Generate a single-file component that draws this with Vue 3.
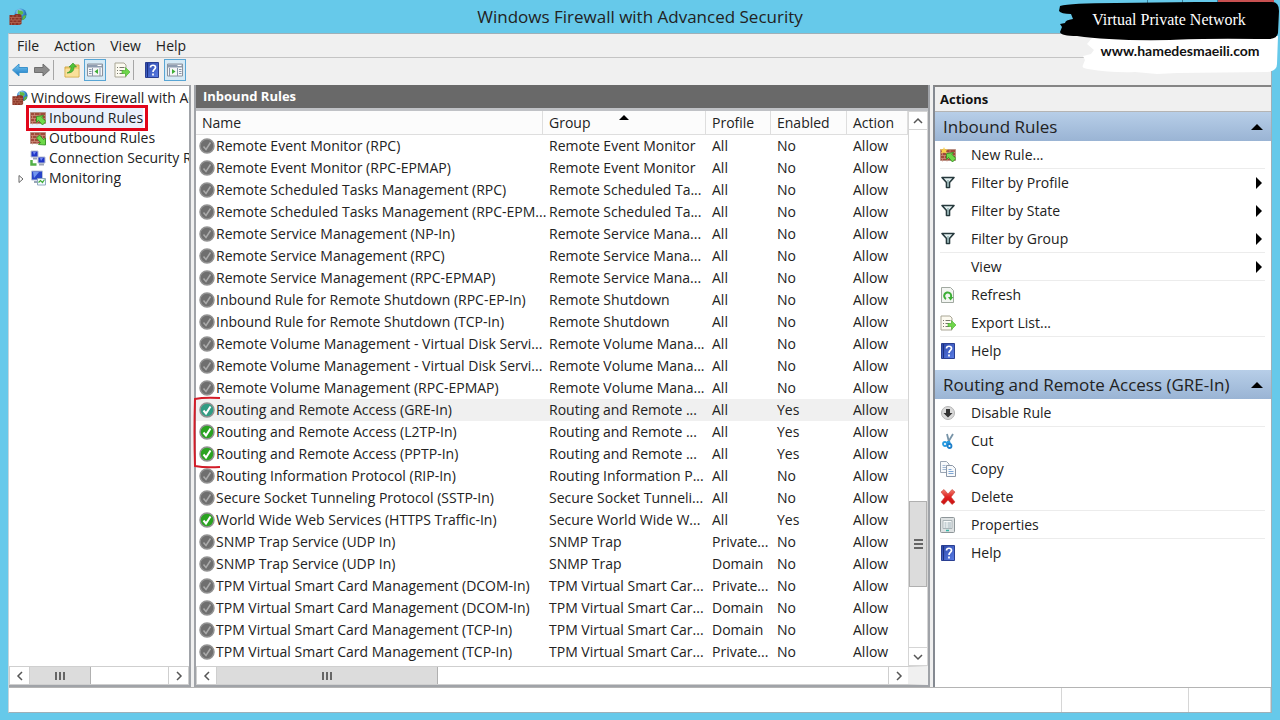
<template>
  <div class="desktop">
    <svg class="sprite" width="0" height="0" aria-hidden="true">
      <defs>
        <radialGradient id="globe" cx="40%" cy="30%" r="75%">
          <stop offset="0" stop-color="#d9f2ff" />
          <stop offset="0.5" stop-color="#3b8fd0" />
          <stop offset="1" stop-color="#124a8c" />
        </radialGradient>
        <linearGradient id="blueArrow" x1="0" y1="0" x2="0" y2="1">
          <stop offset="0" stop-color="#7ccdf5" />
          <stop offset="1" stop-color="#1573c0" />
        </linearGradient>
        <linearGradient id="book" x1="0" y1="0" x2="1" y2="1">
          <stop offset="0" stop-color="#2b46a8" />
          <stop offset="1" stop-color="#5b7ee6" />
        </linearGradient>
        <linearGradient id="redX" x1="0" y1="0" x2="0" y2="1">
          <stop offset="0" stop-color="#f08070" />
          <stop offset="0.5" stop-color="#e02020" />
          <stop offset="1" stop-color="#c81010" />
        </linearGradient>
      </defs>
      <symbol id="firewall" viewBox="0 0 18 18">
        <circle cx="11.5" cy="6.5" r="6" fill="url(#globe)" />
        <path d="M9 2c2 1 4 0 5 2s-1 3-3 3-3-2-2-5zM14 8l3-1c0 3-2 5-4 5z" fill="#5cb845" />
        <path d="M0.500 7h5l1-1h4l2 1v9l-2 1h-10z" fill="#8b3426" />
        <path d="M0.500 9.500h12M0.500 12h12M0.500 14.500h12M4 7v2.500M8 7v2.500M2.500 9.500v2.500M6 9.500v2.500M10 9.500v2.500M4 12v2.500M8 12v2.500M2.500 14.500v2.500M6 14.500v2.500M10 14.500v2.500" stroke="#b9705a" stroke-width="0.700" />
      </symbol>
      <symbol id="wall" viewBox="0 0 16 16">
        <path d="M0.500 2.500h15v11h-15z" fill="#a04a3a" stroke="#b99186" />
        <path d="M1 5.500h14M1 8.500h14M1 11.500h14M4.500 3v2.500M10 3v2.500M2.500 5.500v3M7 5.500v3M12.500 5.500v3M4.500 8.500v3M10 8.500v3M2.500 11.500v3M7 11.500v3" stroke="#d39482" stroke-width="0.700" />
      </symbol>
      <symbol id="inbound" viewBox="0 0 16 16">
        <use href="#wall" width="16" height="16" />
        <path d="M6.500 6.500l7-1-1.500 2 4 4-3.500 3.500-4-4.500-2 2z" fill="#6ed94a" stroke="#2c8a1e" stroke-width="0.800" />
      </symbol>
      <symbol id="outbound" viewBox="0 0 16 16">
        <use href="#wall" width="16" height="16" />
        <path d="M15.500 15l-7-.5 2-2-4-4.500 3-3 4 4.500 2-1.500z" fill="#6ed94a" stroke="#2c8a1e" stroke-width="0.800" />
      </symbol>
      <symbol id="newrule" viewBox="0 0 16 16">
        <use href="#inbound" width="16" height="16" />
        <path d="M4 0l1 2.500 3-.5-2 2 1 2.500-3-1-3 1 1-2.500-2-2 3 .5z" fill="#f8cf4a" />
      </symbol>
      <symbol id="connection" viewBox="0 0 16 16">
        <path d="M1 1h7v6h-7z" fill="#1f35c8" stroke="#b8bfd0" />
        <path d="M3 7.500h4v2h-4z" fill="#9aa2b4" />
        <path d="M8 7h7v6h-7z" fill="#1f35c8" stroke="#b8bfd0" />
        <path d="M9 13.500h5v2h-5z" fill="#9aa2b4" />
        <path d="M3 2l3 0-2 3zM10 8l3 0-2 3z" fill="#7289f0" />
        <path d="M1.500 10v4.500h5" fill="none" stroke="#54b048" stroke-width="2.500" />
      </symbol>
      <symbol id="monitoring" viewBox="0 0 16 16">
        <path d="M1.500 1h11v9h-11z" fill="#2845c8" stroke="#b8c4d8" />
        <path d="M3 2l6 0-5 6z" fill="#7196ef" />
        <path d="M4 11h6v2h-6z" fill="#9aa6b8" />
        <path d="M7.500 8.500h8v6.500h-8z" fill="#f4faff" stroke="#90a8c0" />
        <path d="M8.500 12.500l2-2 2 2 2-3" fill="none" stroke="#42ae3a" stroke-width="1.200" />
      </symbol>
      <symbol id="back" viewBox="0 0 16 14">
        <path d="M0.500 7l6.500-6v3.500h8.500v5h-8.500v3.500z" fill="url(#blueArrow)" stroke="#3c93cc" />
      </symbol>
      <symbol id="forward" viewBox="0 0 16 14">
        <path d="M15.500 7l-6.500-6v3.500h-8.500v5h8.500v3.500z" fill="#8b8b8b" stroke="#6f6f6f" />
      </symbol>
      <symbol id="folder" viewBox="0 0 16 16">
        <path d="M1 5h5l2-2h7v12h-14z" fill="#f2cf74" stroke="#d0a84a" />
        <path d="M1.500 7h13v7.500h-13z" fill="#f9e09a" />
        <path d="M3 11c3-1 4-3 4-6h-2l4-4 3.500 4h-2.500c0 4-2 6-7 6z" fill="#4fc238" stroke="#308c24" stroke-width="0.600" />
      </symbol>
      <symbol id="paneleft" viewBox="0 0 16 14">
        <path d="M0.500 1h15v12h-15z" fill="#f5f6f8" stroke="#8c929c" />
        <path d="M1 1.500h14v3h-14z" fill="#8e9cb0" />
        <path d="M10.500 2.500h4" stroke="#ffffff" />
        <path d="M2 6.500h2.500M2 8.500h2.500M2 10.500h2.500M5.500 5v8M13 5v8" stroke="#8897ab" />
        <path d="M11 6v5l-3.500-2.500z" fill="#3fae36" />
      </symbol>
      <symbol id="paneright" viewBox="0 0 16 14">
        <path d="M0.500 1h15v12h-15z" fill="#f5f6f8" stroke="#8c929c" />
        <path d="M1 1.500h14v3h-14z" fill="#8e9cb0" />
        <path d="M10.500 2.500h4" stroke="#ffffff" />
        <path d="M12 6.500h2.500M12 8.500h2.500M12 10.500h2.500M10.500 5v8M2.500 5v8" stroke="#8897ab" />
        <path d="M5 6v5l3.500-2.500z" fill="#3fae36" />
      </symbol>
      <symbol id="export" viewBox="0 0 16 16">
        <path d="M1 1h9l2 2v12h-11z" fill="#fcfaf0" stroke="#a9a695" />
        <path d="M3 5.500h1M3 8.500h1M3 11.500h1M5.500 5.500h5M5.500 8.500h4M5.500 11.500h4" stroke="#77776d" />
        <path d="M8 8.500h3.500v-3l4.500 4.500-4.500 4.500v-3h-3.500z" fill="#6fd64a" stroke="#46ac2e" stroke-width="0.600" />
      </symbol>
      <symbol id="help" viewBox="0 0 14 16">
        <path d="M0.500 0.500h13v15h-13z" fill="url(#book)" stroke="#2a3f92" />
        <path d="M2.500 1v14" stroke="#1b3080" />
        <path d="M5.500 5.500c0-3 5-3 5 0 0 2-2.500 2-2.500 4.500M8 11.500v2" fill="none" stroke="#ffffff" stroke-width="1.700" />
      </symbol>
      <symbol id="filter" viewBox="0 0 16 16">
        <path d="M2 2.500h12l-4.500 5v5h-3v-5z" fill="#e4f1f1" stroke="#27393d" stroke-width="1.600" stroke-linejoin="round" />
        <path d="M8 5v7" stroke="#70999a" />
      </symbol>
      <symbol id="refresh" viewBox="0 0 16 16">
        <path d="M1.500 0.500h9l3 3v12h-12z" fill="#f3f5f2" stroke="#a1a9a1" />
        <path d="M6 12a3.500 3.500 0 1 1 4.500-1" fill="none" stroke="#3cae36" stroke-width="2" />
        <path d="M8 10h5.500l-3 3.500z" fill="#3cae36" />
      </symbol>
      <symbol id="disable" viewBox="0 0 16 16">
        <circle cx="8" cy="8" r="6.500" fill="#d9d9d9" stroke="#b5b5b5" />
        <path d="M6 4h4v4h2.500l-4.500 4.500-4.500-4.500h2.500z" fill="#333333" />
      </symbol>
      <symbol id="cut" viewBox="0 0 16 16">
        <path d="M7 1l2 8M13 1l-6 10" stroke="#7894a8" stroke-width="1.800" />
        <path d="M7 8l3 0 1 3-4 1z" fill="#2a9be0" />
        <circle cx="5" cy="11" r="2" fill="none" stroke="#2a9be0" stroke-width="1.800" />
        <circle cx="9.500" cy="13" r="2" fill="none" stroke="#1e80cb" stroke-width="1.800" />
      </symbol>
      <symbol id="copy" viewBox="0 0 16 16">
        <path d="M0.500 0.500h6l2.500 2.500v8.500h-8.500z" fill="#f7f9fb" stroke="#9ba6b4" />
        <path d="M2.500 4.500h3M2.500 6.500h4M2.500 8.500h4" stroke="#a2b9d4" />
        <path d="M6.500 4.500h6l3 3v8h-9z" fill="#f7f9fb" stroke="#8c97a6" />
        <path d="M8.500 8.500h3M8.500 10.500h5M8.500 12.500h5" stroke="#7ea6d4" />
      </symbol>
      <symbol id="delete" viewBox="0 0 16 16">
        <path d="M1 3l3-2.500 4 4.500 4-4.500 3 2.500-4 5 4 5-3 2.500-4-4.500-4 4.500-3-2.500 4-5z" fill="url(#redX)" stroke="#c63c34" stroke-width="0.600" stroke-linejoin="round" />
      </symbol>
      <symbol id="properties" viewBox="0 0 16 16">
        <rect x="0.500" y="0.500" width="14" height="15" rx="1" fill="#dde1e2" stroke="#8e9699" />
        <path d="M3 3.500h9v8h-9z" fill="#f8fafa" stroke="#aab4b8" />
        <path d="M4.500 6h2M7.500 6h3.500M4.500 8h2M7.500 8h3.500M4.500 10h2M7.500 10h3.500" stroke="#8ca2aa" stroke-width="0.900" />
        <path d="M6 13.500h3" stroke="#38b4a6" stroke-width="1.500" />
      </symbol>
      <symbol id="check" viewBox="0 0 16 16">
        <circle cx="8" cy="8" r="7" fill="currentColor" stroke="#929292" stroke-width="1.500" />
      </symbol>
    </svg>

    <header class="titlebar">
      <svg class="app-icon"><use href="#firewall" /></svg>
      <h1>Windows Firewall with Advanced Security</h1>
    </header>

    <div class="window">
      <nav class="menubar">
        <button v-for="m in menus" :key="m" type="button">{{ m }}</button>
      </nav>

      <div class="toolbar">
        <template v-for="(t, i) in tools" :key="i">
          <span v-if="t === '|'" class="tool-sep"></span>
          <button v-else type="button" :class="{ toggled: t.on }" :title="t.label" :aria-label="t.label">
            <svg width="16" height="16"><use :href="'#' + t.icon" /></svg>
          </button>
        </template>
      </div>

      <main class="panes">
        <aside class="tree">
          <ul>
            <li v-for="n in tree" :key="n.label" :class="{ root: n.root, marked: n.marked }">
              <svg v-if="n.expandable" class="expander" width="6" height="10"><path d="M1 1.500l4 3.500-4 3.500z" fill="none" stroke="#666666" /></svg>
              <button type="button">
                <svg width="16" height="16"><use :href="'#' + n.icon" /></svg>
                <span>{{ n.label }}</span>
              </button>
            </li>
          </ul>
          <div class="hscroll">
            <button type="button" aria-label="Scroll left"><svg width="8" height="10"><path d="M6 1l-4 4 4 4" /></svg></button>
            <div class="track"><div class="thumb short"><i></i><i></i><i></i></div></div>
            <button type="button" aria-label="Scroll right"><svg width="8" height="10"><path d="M2 1l4 4-4 4" /></svg></button>
          </div>
        </aside>

        <section class="list">
          <h2>Inbound Rules</h2>
          <div class="list-body">
            <div class="grid">
              <table>
                <colgroup>
                  <col />
                  <col class="col-group" />
                  <col class="col-profile" />
                  <col class="col-enabled" />
                  <col class="col-action" />
                </colgroup>
                <thead>
                  <tr>
                    <th>Name</th>
                    <th>Group<svg class="sort" width="10" height="5"><path d="M0 5l5-5 5 5z" /></svg></th>
                    <th>Profile</th>
                    <th>Enabled</th>
                    <th>Action</th>
                  </tr>
                </thead>
                <tbody>
                  <tr v-for="(r, i) in rules" :key="i" :class="{ selected: i === 12 }">
                    <td>
                      <svg class="state" :class="{ on: r[3] === 'Yes' }" width="16" height="16">
                        <use href="#check" />
                        <path d="M4.500 8.500l2.500 3 4.500-7" />
                      </svg>{{ r[0] }}
                    </td>
                    <td>{{ r[1] }}</td>
                    <td>{{ r[2] }}</td>
                    <td>{{ r[3] }}</td>
                    <td>Allow</td>
                  </tr>
                </tbody>
              </table>
              <svg class="bracket" width="28" height="74"><path d="M27 2q-16-1-25 1q-1 33 0 67q10 2 25 1" /></svg>
            </div>
            <div class="vscroll">
              <button type="button" aria-label="Scroll up"><svg width="10" height="8"><path d="M1 6l4-4 4 4" /></svg></button>
              <div class="vtrack"><div class="vthumb"><i></i><i></i><i></i></div></div>
              <button type="button" aria-label="Scroll down"><svg width="10" height="8"><path d="M1 2l4 4 4-4" /></svg></button>
            </div>
          </div>
          <div class="hscroll with-corner">
            <button type="button" aria-label="Scroll left"><svg width="8" height="10"><path d="M6 1l-4 4 4 4" /></svg></button>
            <div class="track"><div class="thumb"><i></i><i></i><i></i></div></div>
            <button type="button" aria-label="Scroll right"><svg width="8" height="10"><path d="M2 1l4 4-4 4" /></svg></button>
          </div>
        </section>

        <aside class="actions">
          <h2>Actions</h2>
          <section v-for="g in actions" :key="g.title">
            <h3>{{ g.title }}<svg width="12" height="6"><path d="M0 6l6-6 6 6z" /></svg></h3>
            <ul>
              <li v-for="a in g.items" :key="a.label" :class="{ divided: a.divided }">
                <button type="button">
                  <svg class="action-icon" width="16" height="16"><use v-if="a.icon" :href="'#' + a.icon" /></svg>
                  <span>{{ a.label }}</span>
                  <svg v-if="a.more" class="more" width="6" height="12"><path d="M0 0l6 6-6 6z" /></svg>
                </button>
              </li>
            </ul>
          </section>
        </aside>
      </main>

      <footer class="statusbar"><span></span><span></span><span></span></footer>
    </div>

    <div class="caption-buttons"><span></span><span></span><span class="close"></span></div>
    <div class="banner">
      <svg width="222" height="76" viewBox="0 0 222 76" aria-hidden="true">
        <path d="M34 38q78-6 186-2l-1 28q0 7-10 8l-90 1-20 1-22-2q-22 1-47-3-7-1-5-4l2-5-2-4 8-2 3-4-7-6z" fill="#ffffff" />
        <path d="M2 6q10-3 56-3l80-1 76 0q7 0 7 9l-1 22q-1 6-10 6-66-1-98 1-60 1-93-4-16 0-17-4l2-5-2-3 5-1q0-3 8-4l-2-5q-10 0-12-3z" fill="#000000" />
      </svg>
      <span class="banner-title">Virtual Private Network</span>
      <a href="#" class="banner-link">www.hamedesmaeili.com</a>
    </div>
  </div>
</template>

<script setup>
const menus = ['File', 'Action', 'View', 'Help'];

const tools = [
  { icon: 'back', label: 'Back' },
  { icon: 'forward', label: 'Forward' },
  '|',
  { icon: 'folder', label: 'Up one level' },
  { icon: 'paneleft', label: 'Show/Hide Console Tree', on: true },
  { icon: 'export', label: 'Export List' },
  '|',
  { icon: 'help', label: 'Help' },
  { icon: 'paneright', label: 'Show/Hide Action Pane', on: true }
];

const tree = [
  { label: 'Windows Firewall with Ad', icon: 'firewall', root: true },
  { label: 'Inbound Rules', icon: 'inbound', marked: true },
  { label: 'Outbound Rules', icon: 'outbound' },
  { label: 'Connection Security R', icon: 'connection' },
  { label: 'Monitoring', icon: 'monitoring', expandable: true }
];

// name, group, profile, enabled
const rules = [
  ['Remote Event Monitor (RPC)', 'Remote Event Monitor', 'All', 'No'],
  ['Remote Event Monitor (RPC-EPMAP)', 'Remote Event Monitor', 'All', 'No'],
  ['Remote Scheduled Tasks Management (RPC)', 'Remote Scheduled Ta...', 'All', 'No'],
  ['Remote Scheduled Tasks Management (RPC-EPM...', 'Remote Scheduled Ta...', 'All', 'No'],
  ['Remote Service Management (NP-In)', 'Remote Service Mana...', 'All', 'No'],
  ['Remote Service Management (RPC)', 'Remote Service Mana...', 'All', 'No'],
  ['Remote Service Management (RPC-EPMAP)', 'Remote Service Mana...', 'All', 'No'],
  ['Inbound Rule for Remote Shutdown (RPC-EP-In)', 'Remote Shutdown', 'All', 'No'],
  ['Inbound Rule for Remote Shutdown (TCP-In)', 'Remote Shutdown', 'All', 'No'],
  ['Remote Volume Management - Virtual Disk Servi...', 'Remote Volume Mana...', 'All', 'No'],
  ['Remote Volume Management - Virtual Disk Servi...', 'Remote Volume Mana...', 'All', 'No'],
  ['Remote Volume Management (RPC-EPMAP)', 'Remote Volume Mana...', 'All', 'No'],
  ['Routing and Remote Access (GRE-In)', 'Routing and Remote ...', 'All', 'Yes'],
  ['Routing and Remote Access (L2TP-In)', 'Routing and Remote ...', 'All', 'Yes'],
  ['Routing and Remote Access (PPTP-In)', 'Routing and Remote ...', 'All', 'Yes'],
  ['Routing Information Protocol (RIP-In)', 'Routing Information P...', 'All', 'No'],
  ['Secure Socket Tunneling Protocol (SSTP-In)', 'Secure Socket Tunneli...', 'All', 'No'],
  ['World Wide Web Services (HTTPS Traffic-In)', 'Secure World Wide W...', 'All', 'Yes'],
  ['SNMP Trap Service (UDP In)', 'SNMP Trap', 'Private...', 'No'],
  ['SNMP Trap Service (UDP In)', 'SNMP Trap', 'Domain', 'No'],
  ['TPM Virtual Smart Card Management (DCOM-In)', 'TPM Virtual Smart Car...', 'Private...', 'No'],
  ['TPM Virtual Smart Card Management (DCOM-In)', 'TPM Virtual Smart Car...', 'Domain', 'No'],
  ['TPM Virtual Smart Card Management (TCP-In)', 'TPM Virtual Smart Car...', 'Domain', 'No'],
  ['TPM Virtual Smart Card Management (TCP-In)', 'TPM Virtual Smart Car...', 'Private...', 'No']
];

const actions = [
  {
    title: 'Inbound Rules',
    items: [
      { label: 'New Rule...', icon: 'newrule', divided: true },
      { label: 'Filter by Profile', icon: 'filter', more: true },
      { label: 'Filter by State', icon: 'filter', more: true },
      { label: 'Filter by Group', icon: 'filter', more: true, divided: true },
      { label: 'View', more: true, divided: true },
      { label: 'Refresh', icon: 'refresh' },
      { label: 'Export List...', icon: 'export', divided: true },
      { label: 'Help', icon: 'help' }
    ]
  },
  {
    title: 'Routing and Remote Access (GRE-In)',
    items: [
      { label: 'Disable Rule', icon: 'disable', divided: true },
      { label: 'Cut', icon: 'cut' },
      { label: 'Copy', icon: 'copy' },
      { label: 'Delete', icon: 'delete', divided: true },
      { label: 'Properties', icon: 'properties', divided: true },
      { label: 'Help', icon: 'help' }
    ]
  }
];
</script>

<style>
body {
  margin: 0;
  background: #66c9ea;
}
</style>

<style scoped>
* {
  box-sizing: border-box;
}

.desktop {
  position: relative;
  display: flex;
  flex-direction: column;
  min-height: 100vh;
  padding: 0 8px 7px;
  overflow: hidden;
  background: #66c9ea;
  color: #222222;
  font: 14px/20px "Open Sans", "Noto Sans", sans-serif;
}

.sprite {
  position: absolute;
}

svg {
  flex: none;
}

button {
  border: 0;
  padding: 0;
  background: none;
  color: inherit;
  font: inherit;
}

ul {
  list-style: none;
  margin: 0;
  padding: 0;
}

h1,
h2,
h3 {
  margin: 0;
}

.titlebar {
  display: grid;
  grid-template-columns: 20px 1fr 20px;
  align-items: center;
  height: 33px;
}

.app-icon {
  width: 20px;
  height: 18px;
}

.titlebar h1 {
  text-align: center;
  font-size: 17px;
  font-weight: 400;
  line-height: 20px;
}

.window {
  flex: 1;
  display: flex;
  flex-direction: column;
  border: 1px solid #9fb0b8;
  border-left-color: #c6d6dc;
  background: #f0f0f0;
}

.menubar {
  display: flex;
  gap: 15px;
  height: 24px;
  padding: 0 8px;
  border-bottom: 1px solid #c4c4c4;
}

.toolbar {
  display: flex;
  align-items: center;
  height: 23px;
}

.toolbar button {
  display: flex;
  align-items: center;
  justify-content: center;
  width: 22px;
  height: 22px;
}

.toolbar .toggled {
  border: 1px solid #58a5d4;
  background: #d5e9f5;
}

.toolbar button + .toggled {
  margin: 0 5px 0 1px;
}

.tool-sep {
  width: 1px;
  height: 20px;
  margin-right: 7px;
  background: #a6a6a6;
}

.panes {
  flex: 1;
  display: flex;
  gap: 3px;
  margin-top: 4px;
}

.tree {
  display: flex;
  flex-direction: column;
  width: 182px;
  border: 2px solid #a0a3a8;
  border-width: 1px 2px 2px 0;
  background: #ffffff;
}

.tree ul {
  flex: 1;
  padding-top: 2px;
}

.tree li {
  position: relative;
  display: flex;
  height: 20px;
  padding-left: 21px;
}

.tree li.root {
  padding-left: 3px;
}

.tree button {
  display: flex;
  align-items: center;
  min-width: 0;
  white-space: nowrap;
}

.tree li button {
  gap: 3px;
  overflow: hidden;
}

.tree .expander {
  position: absolute;
  left: 9px;
  top: 6px;
}

.tree .marked button {
  overflow: visible;
  background: #eaf1fc;
}

.tree .marked::after {
  content: "";
  position: absolute;
  top: -3px;
  bottom: -3px;
  left: 17px;
  width: 122px;
  box-sizing: border-box;
  border: 3px solid #e2061a;
}

.list {
  flex: 1;
  display: flex;
  flex-direction: column;
  min-width: 0;
  border: 2px solid #a0a3a8;
  border-width: 0 2px 2px;
  background: #ffffff;
}

.list h2 {
  height: 23px;
  padding-left: 7px;
  background: #696969;
  color: #ffffff;
  font-size: 13px;
  line-height: 23px;
}

.list-body {
  flex: 1;
  display: flex;
  border-top: 3px solid #c0c2c6;
}

.grid {
  position: relative;
  flex: 1;
  min-width: 0;
}

table {
  width: 100%;
  table-layout: fixed;
  border-collapse: separate;
  border-spacing: 0;
}

.col-group {
  width: 163px;
}

.col-profile {
  width: 65px;
}

.col-enabled {
  width: 76px;
}

.col-action {
  width: 61px;
}

th,
td {
  height: 22px;
  padding: 0 0 0 6px;
  text-align: left;
  font-weight: 400;
  line-height: 20px;
  white-space: nowrap;
}

th {
  position: relative;
  height: 24px;
  border-right: 1px solid #dedede;
  border-bottom: 1px solid #dedede;
  background: #fcfcfc;
}

td:first-child {
  padding-left: 3px;
}

.sort {
  position: absolute;
  left: 76px;
  top: 4px;
}

.selected td {
  background: #f0f0f0;
}

.state {
  margin-right: 1px;
  vertical-align: -3px;
  color: #6f6f6f;
}

.state path {
  fill: none;
  stroke: #aaaaaa;
  stroke-width: 1.5;
}

.state.on {
  color: #2aa321;
}

.state.on path {
  stroke: #ffffff;
  stroke-width: 2;
}

.selected .state.on {
  color: #319c83;
}

.bracket {
  position: absolute;
  left: -3px;
  top: 285px;
}

.bracket path {
  fill: none;
  stroke: #d21c28;
  stroke-width: 2;
}

.vscroll {
  display: flex;
  flex-direction: column;
  width: 20px;
  border: 1px solid #d5d5d5;
  border-width: 0 1px;
}

.vscroll button,
.hscroll button {
  display: flex;
  align-items: center;
  justify-content: center;
}

.vscroll button {
  height: 19px;
  border: 1px solid #d5d5d5;
  border-width: 1px 0;
}

.vscroll button path,
.hscroll button path {
  fill: none;
  stroke: #555555;
  stroke-width: 1.5;
}

.vtrack {
  flex: 1;
  display: flex;
  flex-direction: column;
  justify-content: flex-end;
  padding-bottom: 60px;
}

.vthumb {
  display: flex;
  flex-direction: column;
  align-items: center;
  justify-content: center;
  gap: 2px;
  height: 86px;
  border: 1px solid #b0b0b0;
  background: #dcdcdc;
}

.vthumb i {
  width: 9px;
  height: 2px;
  background: #666666;
}

.hscroll {
  display: flex;
  height: 19px;
  border: 1px solid #cfcfcf;
  background: #ffffff;
}

.hscroll button {
  width: 19px;
}

.with-corner {
  border-right: 20px solid #f0f0f0;
}

.track {
  flex: 1;
  border: 1px solid #cfcfcf;
  border-width: 0 1px;
}

.thumb {
  display: flex;
  align-items: center;
  justify-content: center;
  gap: 2px;
  width: 33%;
  height: 100%;
  border-right: 1px solid #b0b0b0;
  background: #dcdcdc;
}

.thumb.short {
  width: 44%;
}

.thumb i {
  width: 2px;
  height: 8px;
  background: #666666;
}

.actions {
  width: 338px;
  border-top: 2px solid #858585;
  border-left: 2px solid #858a92;
  background: #ffffff;
}

.actions h2 {
  height: 25px;
  padding-left: 5px;
  border-bottom: 1px solid #b4b4b4;
  background: #f0f0f0;
  color: #111111;
  font-size: 13px;
  line-height: 25px;
}

.actions h3 {
  display: flex;
  align-items: center;
  justify-content: space-between;
  height: 29px;
  padding: 0 8px;
  background: linear-gradient(#b7cee8, #9ab4d4);
  font-size: 17px;
  font-weight: 400;
}

.actions section + section {
  margin-top: 5px;
}

.actions li {
  height: 28px;
  margin: 0 6px 0 5px;
  border-bottom: 1px solid transparent;
}

.actions li.divided {
  border-bottom-color: #ececec;
}

.actions li button {
  display: flex;
  align-items: center;
  width: 100%;
  height: 27px;
  padding-right: 3px;
}

.action-icon {
  margin-right: 15px;
}

.more {
  margin-left: auto;
}

.statusbar {
  display: flex;
  height: 25px;
  border-top: 1px solid #b4b4b4;
  background: #ffffff;
}

.statusbar span {
  width: 127px;
  border-right: 1px solid #d6d6d6;
}

.statusbar span:first-child {
  flex: 1;
}

.statusbar span:last-child {
  width: 82px;
}

.caption-buttons {
  position: absolute;
  top: 0;
  right: 6px;
  display: flex;
  height: 4px;
}

.caption-buttons span {
  width: 35px;
  border-left: 1px solid #3a7f98;
}

.caption-buttons .close {
  width: 57px;
  background: #c75050;
}

.banner {
  position: absolute;
  top: 0;
  right: 0;
  width: 222px;
  height: 76px;
}

.banner-title,
.banner-link {
  position: absolute;
  right: 0;
  width: 222px;
  text-align: center;
  white-space: nowrap;
}

.banner-title {
  top: 10px;
  color: #ffffff;
  font: 16px/20px "Liberation Serif", serif;
}

.banner-link {
  top: 41px;
  padding-left: 22px;
  color: #111111;
  font: 700 14px/20px Lato, sans-serif;
  text-decoration: none;
}
</style>
